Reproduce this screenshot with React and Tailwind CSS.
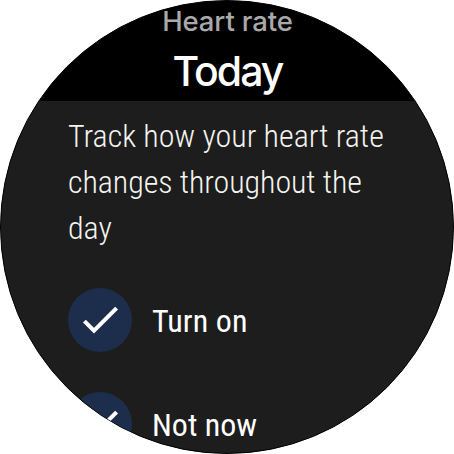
function CheckBadge() {
  return (
    <span className="flex size-16 shrink-0 items-center justify-center rounded-full bg-[#1d2e4d]">
      <svg viewBox="0 0 64 64" className="size-16" fill="none" stroke="white" strokeWidth="4">
        <path d="M16.4 33.1 L26 42.7 L48.6 20.1" />
      </svg>
    </span>
  );
}

function Option({ label, tracking = "" }) {
  return (
    <button className="flex h-16 items-center gap-5 text-left">
      <CheckBadge />
      <span className={`whitespace-nowrap pt-0.5 text-[32px] leading-[46px] text-white ${tracking}`}>{label}</span>
    </button>
  );
}

export default function App() {
  return (
    <div className="h-[454px] w-[454px] overflow-hidden bg-white">
      <main className="flex h-[454px] w-[454px] flex-col overflow-hidden rounded-full border border-black bg-[#1d1d1d]">
        <header className="flex h-[100px] shrink-0 flex-col items-center bg-black font-['Inter',sans-serif] font-medium">
          <div className="mt-1 h-8 whitespace-nowrap pl-px text-[27.5px] leading-8 tracking-[-0.1px] text-[#a9a9a9]">Heart rate</div>
          <h1 className="mt-[9px] whitespace-nowrap pl-px text-[41px] font-medium leading-[50px] tracking-[-2px] text-white">Today</h1>
        </header>
        <section className="flex flex-col pl-[67px] pt-3 font-['Roboto',sans-serif] [font-stretch:75%]">
          <p className="whitespace-nowrap text-[32px] font-light leading-[46px] text-[#f4f4f0]">
            Track how your heart rate
            <br />
            <span className="tracking-[-0.06px]">changes throughout the</span>
            <br />
            day
          </p>
          <div className="mt-[37px] flex flex-col gap-10">
            <Option label="Turn on" tracking="tracking-[0.1px]" />
            <Option label="Not now" />
          </div>
        </section>
      </main>
    </div>
  );
}
